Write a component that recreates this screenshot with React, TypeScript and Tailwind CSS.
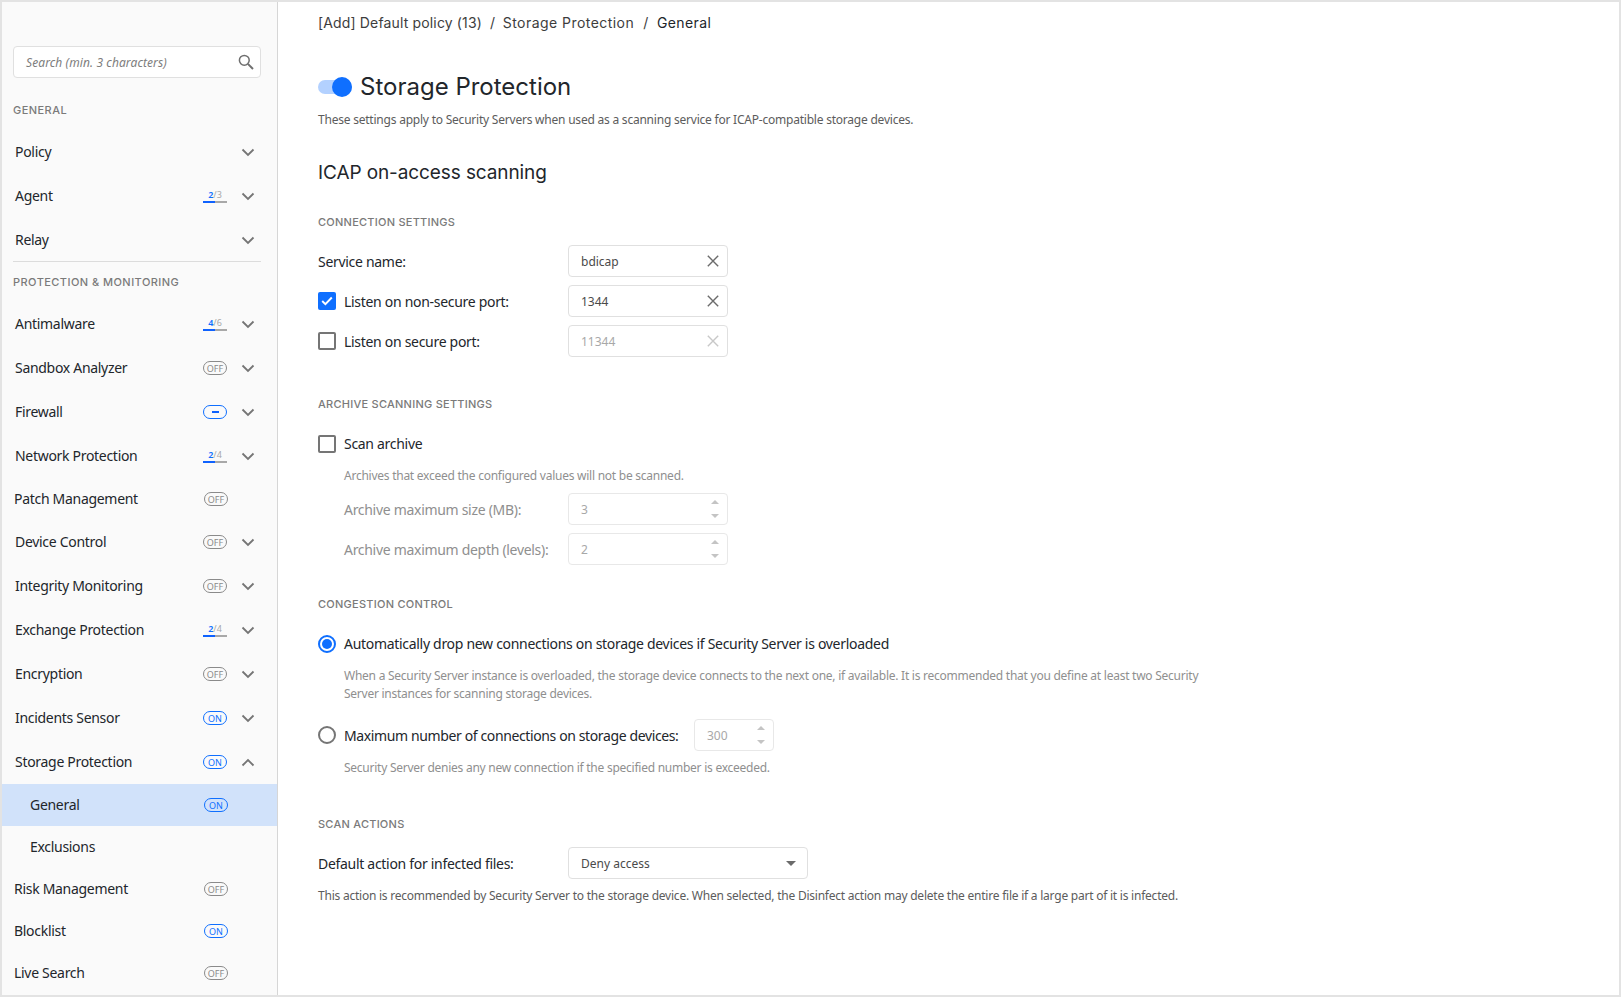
import { ReactNode } from 'react';

type Status = 'on' | 'off' | 'partial' | { done: number; total: number } | null;

interface NavRow {
  label: string;
  status?: Status;
  chevron?: 'down' | 'up';
  active?: boolean;
  sub?: boolean;
}

const GENERAL_ROWS: NavRow[] = [
  { label: 'Policy', chevron: 'down' },
  { label: 'Agent', status: { done: 2, total: 3 }, chevron: 'down' },
  { label: 'Relay', chevron: 'down' },
];

const PROTECTION_ROWS: NavRow[] = [
  { label: 'Antimalware', status: { done: 4, total: 6 }, chevron: 'down' },
  { label: 'Sandbox Analyzer', status: 'off', chevron: 'down' },
  { label: 'Firewall', status: 'partial', chevron: 'down' },
  { label: 'Network Protection', status: { done: 2, total: 4 }, chevron: 'down' },
  { label: 'Patch Management', status: 'off' },
  { label: 'Device Control', status: 'off', chevron: 'down' },
  { label: 'Integrity Monitoring', status: 'off', chevron: 'down' },
  { label: 'Exchange Protection', status: { done: 2, total: 4 }, chevron: 'down' },
  { label: 'Encryption', status: 'off', chevron: 'down' },
  { label: 'Incidents Sensor', status: 'on', chevron: 'down' },
  { label: 'Storage Protection', status: 'on', chevron: 'up' },
  { label: 'General', status: 'on', sub: true, active: true },
  { label: 'Exclusions', sub: true },
  { label: 'Risk Management', status: 'off' },
  { label: 'Blocklist', status: 'on' },
  { label: 'Live Search', status: 'off' },
];

function StatusBadge({ status }: { status: Status }) {
  if (!status) return <div className="w-6" />;
  if (typeof status === 'object') {
    return (
      <div className="relative h-[14px] w-6 text-center text-[9px] leading-[11px] text-[#a8a8a8]">
        <span className="font-semibold text-[#0f6fff]">{status.done}</span>/{status.total}
        <div className="absolute bottom-0 left-0 flex h-[2px] w-6 bg-[#a8a8a8]">
          <div className="w-3 bg-[#0f62fe]" />
        </div>
      </div>
    );
  }
  if (status === 'partial') {
    return (
      <div className="flex h-[14px] w-6 items-center justify-center rounded-full border border-[#0f6fff]">
        <div className="h-[2px] w-[7px] bg-[#0f62fe]" />
      </div>
    );
  }
  const on = status === 'on';
  return (
    <div
      className={`flex h-[14px] w-6 items-center justify-center rounded-full border text-[9px] leading-none ${
        on ? 'border-[#0f6fff] text-[#0f6fff]' : 'border-[#8a8a8a] text-[#8a8a8a]'
      }`}
    >
      {on ? 'ON' : 'OFF'}
    </div>
  );
}

function Chevron({ dir }: { dir: 'down' | 'up' }) {
  return (
    <svg width="14" height="9" viewBox="0 0 14 9" fill="none" className="text-[#757575]">
      <path d={dir === 'down' ? 'M1.5 1.5 7 7l5.5-5.5' : 'M1.5 7.5 7 2l5.5 5.5'} stroke="currentColor" strokeWidth="1.8" />
    </svg>
  );
}

function SidebarRow({ row }: { row: NavRow }) {
  const tall = !!row.chevron;
  return (
    <div
      className={`flex items-center ${tall ? 'h-11 pl-[13px]' : 'h-[42px] pl-3'} ${row.active ? 'bg-[#d1e2fa]' : ''}`}
    >
      <span
        className={`flex-1 -translate-y-px text-[14px] tracking-[-0.3px] text-[#22262b] ${row.sub ? 'pl-[16px]' : ''}`}
      >
        {row.label}
      </span>
      <div className={`flex justify-start ${tall ? 'w-[74px]' : 'w-[73px]'}`}>
        <StatusBadge status={row.status ?? null} />
        {row.chevron && (
          <div className="ml-[14px] flex w-[14px] items-center">
            <Chevron dir={row.chevron} />
          </div>
        )}
      </div>
    </div>
  );
}

function Sidebar() {
  return (
    <aside className="flex w-[276px] shrink-0 flex-col border-r border-[#d6d6d6] bg-[#fafafa]">
      <div className="mx-[11px] mt-[44px] flex h-8 w-[248px] items-center justify-between rounded border border-[#e0e0e0] bg-white pl-[12px] pr-[6px]">
        <span className="pt-px text-[12px] italic tracking-[0.1px] text-[#7d7d7d]">Search (min. 3 characters)</span>
        <svg width="16" height="16" viewBox="0 0 16 16" fill="none" className="text-[#6f6f6f]">
          <circle cx="6.3" cy="6.3" r="4.9" stroke="currentColor" strokeWidth="1.5" />
          <path d="M9.9 9.9 15 15" stroke="currentColor" strokeWidth="2" />
        </svg>
      </div>
      <h4 className="ml-[11px] mt-[24px] font-['Inter'] text-[11px] font-medium leading-4 tracking-[0.45px] text-[#7a7a7a]">
        GENERAL
      </h4>
      <div className="mt-[12px]">
        {GENERAL_ROWS.map((r) => (
          <SidebarRow key={r.label} row={r} />
        ))}
      </div>
      <div className="mx-[11px] -mt-px h-px w-[248px] bg-[#dcdcdc]" />
      <h4 className="ml-[11px] mt-[12px] font-['Inter'] text-[11px] font-medium leading-4 tracking-[0.45px] text-[#7a7a7a]">
        PROTECTION &amp; MONITORING
      </h4>
      <div className="mt-[12px]">
        {PROTECTION_ROWS.map((r) => (
          <SidebarRow key={r.label} row={r} />
        ))}
      </div>
    </aside>
  );
}

function SectionTitle({ children, className }: { children: ReactNode; className: string }) {
  return (
    <h3 className={`font-['Inter'] text-[11px] font-medium leading-4 tracking-[0.25px] text-[#7a7a7a] ${className}`}>
      {children}
    </h3>
  );
}

function XIcon({ faded }: { faded?: boolean }) {
  return (
    <svg width="12" height="12" viewBox="0 0 12 12" fill="none" className={faded ? 'text-[#c8c8c8]' : 'text-[#6b6b6b]'}>
      <path d="M.8.8l10.4 10.4M11.2.8.8 11.2" stroke="currentColor" strokeWidth="1.4" />
    </svg>
  );
}

function TextField({ value, disabled }: { value: string; disabled?: boolean }) {
  return (
    <div
      className={`flex h-8 w-40 items-center justify-between rounded border border-[#e0e0e0] pl-[12px] pr-[8px] text-[12px] tracking-normal ${
        disabled ? 'text-[#a8a8a8]' : 'text-[#4a4a4a]'
      }`}
    >
      <span className="translate-y-px">{value}</span>
      <XIcon faded={disabled} />
    </div>
  );
}

function NumberField({ value, width }: { value: string; width: string }) {
  return (
    <div
      className={`flex h-8 items-center justify-between rounded border border-[#e8e8e8] pl-[12px] pr-[8px] text-[12px] tracking-normal text-[#a8a8a8] ${width}`}
    >
      <span className="translate-y-px">{value}</span>
      <div className="flex flex-col gap-[10px]">
        <div className="h-0 w-0 border-x-4 border-b-[4px] border-x-transparent border-b-[#c4c4c4]" />
        <div className="h-0 w-0 border-x-4 border-t-[4px] border-x-transparent border-t-[#c4c4c4]" />
      </div>
    </div>
  );
}

function Checkbox({ checked }: { checked?: boolean }) {
  if (checked) {
    return (
      <div className="flex h-[18px] w-[18px] items-center justify-center rounded-[2px] bg-[#0f6fff]">
        <svg width="12" height="10" viewBox="0 0 12 10" fill="none">
          <path d="M1.2 5 4.4 8.2 10.8 1.5" stroke="white" strokeWidth="1.9" />
        </svg>
      </div>
    );
  }
  return <div className="h-[18px] w-[18px] rounded-[2px] border-2 border-[#757575] bg-white" />;
}

function Radio({ checked }: { checked?: boolean }) {
  if (checked) {
    return (
      <div className="flex h-[18px] w-[18px] items-center justify-center rounded-full border-2 border-[#0f6fff]">
        <div className="h-[10px] w-[10px] rounded-full bg-[#0f6fff]" />
      </div>
    );
  }
  return <div className="h-[18px] w-[18px] rounded-full border-2 border-[#757575]" />;
}

function Hint({ children, className = '' }: { children: ReactNode; className?: string }) {
  return <p className={`pl-[26px] text-[12px] leading-[18px] tracking-[-0.25px] text-[#8f8f8f] ${className}`}>{children}</p>;
}

export default function App() {
  return (
    <div className="flex h-[997px] w-[1621px] overflow-hidden border-2 border-[#e3e3e3] bg-white font-['Noto_Sans',sans-serif]">
      <Sidebar />
      <main className="flex-1 pl-10 text-[14px] tracking-[-0.3px] text-[#22262b]">
        <div className="mt-[9px] flex h-[22px] items-center font-['Inter'] text-[14px] text-[#3d3d3d]">
          <span className="tracking-[0.15px]">[Add] Default policy (13)</span>
          <span className="mx-2">/</span>
          <span className="tracking-[0.45px]">Storage Protection</span>
          <span className="mx-[9px]">/</span>
          <span className="tracking-[0.4px] text-[#22262b]">General</span>
        </div>

        <div className="mt-[39px] flex h-[30px] items-center">
          <div className="relative h-[14px] w-[34px] rounded-full bg-[#b3d1ff]">
            <div className="absolute right-0 top-[-3px] h-5 w-5 rounded-full bg-[#0f6fff]" />
          </div>
          <h1 className="ml-2 font-['Inter'] text-[24px] font-normal tracking-normal text-[#22262b]">Storage Protection</h1>
        </div>
        <p className="mt-[9px] text-[12px] leading-[18px] tracking-[-0.22px] text-[#5c5c5c]">
          These settings apply to Security Servers when used as a scanning service for ICAP-compatible storage devices.
        </p>
        <h2 className="mt-[31px] font-['Inter'] text-[19px] font-normal leading-[26px] tracking-[-0.1px] text-[#22262b]">
          ICAP on-access scanning
        </h2>

        <SectionTitle className="mt-[28px]">CONNECTION SETTINGS</SectionTitle>
        <div className="mt-[15px] flex flex-col gap-2">
          <div className="flex items-center">
            <span className="w-[250px]">Service name:</span>
            <TextField value="bdicap" />
          </div>
          <div className="flex items-center">
            <div className="flex w-[250px] items-center gap-2">
              <Checkbox checked />
              <span>Listen on non-secure port:</span>
            </div>
            <TextField value="1344" />
          </div>
          <div className="flex items-center">
            <div className="flex w-[250px] items-center gap-2">
              <Checkbox />
              <span>Listen on secure port:</span>
            </div>
            <TextField value="11344" disabled />
          </div>
        </div>

        <SectionTitle className="mt-[39px]">ARCHIVE SCANNING SETTINGS</SectionTitle>
        <div className="mt-[22px] flex h-5 items-center gap-2">
          <Checkbox />
          <span className="-translate-y-px">Scan archive</span>
        </div>
        <Hint className="mt-[13px]">Archives that exceed the configured values will not be scanned.</Hint>
        <div className="mt-2 flex flex-col gap-2 text-[#8f8f8f]">
          <div className="flex items-center">
            <span className="w-[250px] pl-[26px]">Archive maximum size (MB):</span>
            <NumberField value="3" width="w-40" />
          </div>
          <div className="flex items-center">
            <span className="w-[250px] pl-[26px]">Archive maximum depth (levels):</span>
            <NumberField value="2" width="w-40" />
          </div>
        </div>

        <SectionTitle className="mt-[31px]">CONGESTION CONTROL</SectionTitle>
        <div className="mt-[22px] flex h-5 items-center gap-2">
          <Radio checked />
          <span className="-translate-y-px">
            Automatically drop new connections on storage devices if Security Server is overloaded
          </span>
        </div>
        <Hint className="mt-[13px] w-[888px]">
          When a Security Server instance is overloaded, the storage device connects to the next one, if available. It
          is recommended that you define at least two Security Server instances for scanning storage devices.
        </Hint>
        <div className="mt-[16px] flex items-center gap-2">
          <Radio />
          <span className="w-[342px] tracking-[-0.38px]">Maximum number of connections on storage devices:</span>
          <NumberField value="300" width="w-20" />
        </div>
        <Hint className="mt-2">Security Server denies any new connection if the specified number is exceeded.</Hint>

        <SectionTitle className="mt-[39px]">SCAN ACTIONS</SectionTitle>
        <div className="mt-[15px] flex items-center">
          <span className="w-[250px]">Default action for infected files:</span>
          <div className="flex h-8 w-60 items-center justify-between rounded border border-[#e0e0e0] pl-[12px] pr-[11px] text-[12px] tracking-normal text-[#4a4a4a]">
            <span className="translate-y-px">Deny access</span>
            <div className="h-0 w-0 border-x-[5px] border-t-[5px] border-x-transparent border-t-[#6b6b6b]" />
          </div>
        </div>
        <p className="mt-2 text-[12px] leading-[18px] tracking-[-0.23px] text-[#5c5c5c]">
          This action is recommended by Security Server to the storage device. When selected, the Disinfect action may
          delete the entire file if a large part of it is infected.
        </p>
      </main>
    </div>
  );
}
